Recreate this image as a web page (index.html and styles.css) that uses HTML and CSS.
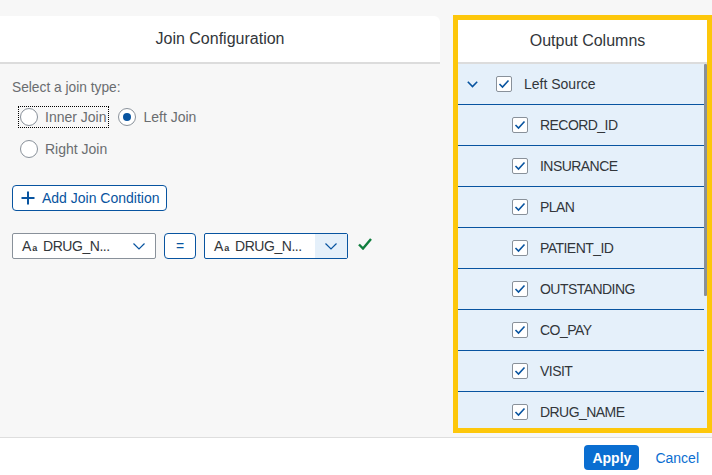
FILE: index.html
```html
<!DOCTYPE html>
<html>
<head>
<meta charset="utf-8">
<link rel="stylesheet" href="styles.css">
</head>
<body>
<div class="app">
  <div class="main">
    <section class="join-panel">
      <header class="panel-header join-header">Join Configuration</header>
      <div class="join-body">
        <div class="field-label">Select a join type:</div>
        <div class="radio-group">
          <div class="radio-row">
            <label class="radio focused"><span class="radio-circle"></span>Inner Join</label>
            <label class="radio"><span class="radio-circle checked"></span>Left Join</label>
          </div>
          <div class="radio-row">
            <label class="radio"><span class="radio-circle"></span>Right Join</label>
          </div>
        </div>
        <button class="btn-ghost add-btn">
          <svg class="plus" width="14" height="14" viewBox="0 0 14 14"><path d="M7 0.5V13.5M0.5 7H13.5" stroke="#0854a0" stroke-width="2" fill="none"/></svg>
          Add Join Condition
        </button>
        <div class="condition">
          <div class="select">
            <span class="type-icon">A<span class="small-a">a</span></span>
            <span class="select-text">DRUG_N...</span>
            <span class="select-arrow">
              <svg width="12" height="7" viewBox="0 0 12 7"><path d="M0.5 0.5L6 6L11.5 0.5" stroke="#0854a0" stroke-width="1.2" fill="none"/></svg>
            </span>
          </div>
          <button class="btn-ghost eq-btn">=</button>
          <div class="select select-active">
            <span class="type-icon">A<span class="small-a">a</span></span>
            <span class="select-text">DRUG_N...</span>
            <span class="select-arrow">
              <svg width="12" height="7" viewBox="0 0 12 7"><path d="M0.5 0.5L6 6L11.5 0.5" stroke="#0854a0" stroke-width="1.2" fill="none"/></svg>
            </span>
          </div>
          <svg class="ok" width="14" height="12" viewBox="0 0 14 12"><path d="M1 6.5L5 10.5L13 1" stroke="#107e3e" stroke-width="2.4" fill="none"/></svg>
        </div>
      </div>
    </section>
    <section class="output-panel">
      <header class="panel-header out-header">Output Columns</header>
      <div class="tree">
        <div class="tree-rows">
          <div class="tree-row parent">
            <svg class="expander" width="11" height="7" viewBox="0 0 11 7"><path d="M0.8 0.8L5.5 5.5L10.2 0.8" stroke="#0854a0" stroke-width="1.6" fill="none"/></svg>
            <span class="cb"><svg width="12" height="10" viewBox="0 0 12 10"><path d="M1.5 5L4.5 8L10.5 1.5" stroke="#0854a0" stroke-width="1.6" fill="none"/></svg></span>
            <span class="row-text">Left Source</span>
          </div>
          <div class="tree-row child"><span class="cb"><svg width="12" height="10" viewBox="0 0 12 10"><path d="M1.5 5L4.5 8L10.5 1.5" stroke="#0854a0" stroke-width="1.6" fill="none"/></svg></span><span class="row-text caps">RECORD_ID</span></div>
          <div class="tree-row child"><span class="cb"><svg width="12" height="10" viewBox="0 0 12 10"><path d="M1.5 5L4.5 8L10.5 1.5" stroke="#0854a0" stroke-width="1.6" fill="none"/></svg></span><span class="row-text caps">INSURANCE</span></div>
          <div class="tree-row child"><span class="cb"><svg width="12" height="10" viewBox="0 0 12 10"><path d="M1.5 5L4.5 8L10.5 1.5" stroke="#0854a0" stroke-width="1.6" fill="none"/></svg></span><span class="row-text caps">PLAN</span></div>
          <div class="tree-row child"><span class="cb"><svg width="12" height="10" viewBox="0 0 12 10"><path d="M1.5 5L4.5 8L10.5 1.5" stroke="#0854a0" stroke-width="1.6" fill="none"/></svg></span><span class="row-text caps">PATIENT_ID</span></div>
          <div class="tree-row child"><span class="cb"><svg width="12" height="10" viewBox="0 0 12 10"><path d="M1.5 5L4.5 8L10.5 1.5" stroke="#0854a0" stroke-width="1.6" fill="none"/></svg></span><span class="row-text caps">OUTSTANDING</span></div>
          <div class="tree-row child"><span class="cb"><svg width="12" height="10" viewBox="0 0 12 10"><path d="M1.5 5L4.5 8L10.5 1.5" stroke="#0854a0" stroke-width="1.6" fill="none"/></svg></span><span class="row-text caps">CO_PAY</span></div>
          <div class="tree-row child"><span class="cb"><svg width="12" height="10" viewBox="0 0 12 10"><path d="M1.5 5L4.5 8L10.5 1.5" stroke="#0854a0" stroke-width="1.6" fill="none"/></svg></span><span class="row-text caps">VISIT</span></div>
          <div class="tree-row child"><span class="cb"><svg width="12" height="10" viewBox="0 0 12 10"><path d="M1.5 5L4.5 8L10.5 1.5" stroke="#0854a0" stroke-width="1.6" fill="none"/></svg></span><span class="row-text caps">DRUG_NAME</span></div>
        </div>
        <div class="scroll-thumb"></div>
      </div>
    </section>
  </div>
  <footer class="footer">
    <button class="btn-emph">Apply</button>
    <button class="btn-transparent">Cancel</button>
  </footer>
</div>
</body>
</html>
```

FILE: styles.css
```css
* { box-sizing: border-box; }
html, body { margin: 0; padding: 0; }
body {
  width: 712px;
  height: 475px;
  overflow: hidden;
  background: #ffffff;
  font-family: "Liberation Sans", Arial, sans-serif;
  color: #32363a;
}
.app { display: flex; flex-direction: column; height: 475px; }
.main {
  height: 438px;
  background: #f7f7f7;
  border-bottom: 1px solid #dedede;
  display: flex;
  align-items: flex-start;
  padding-top: 15px;
  gap: 13px;
}
.join-panel {
  width: 440px;
  margin-top: 1px;
}
.panel-header {
  background: #ffffff;
  border-bottom: 2px solid #dcdcdc;
  display: flex;
  align-items: center;
  justify-content: center;
  font-size: 16px;
  color: #32363a;
}
.join-header {
  height: 48px;
  border-top-right-radius: 6px;
}
.join-body {
  padding: 15px 0 0 12px;
}
.field-label {
  font-size: 13.75px;
  line-height: 18px;
  color: #6a6d70;
}
.radio-group {
  margin-top: 9px;
  margin-left: 6px;
  display: flex;
  flex-direction: column;
  gap: 10px;
}
.radio-row { display: flex; gap: 7px; height: 22px; }
.radio {
  display: flex;
  align-items: center;
  gap: 7px;
  padding: 0 2px 0 1px;
  font-size: 14px;
  color: #6a6d70;
  border: 1px dotted transparent;
}
.radio.focused { border-color: #000000; }
.radio-circle {
  width: 18px;
  height: 18px;
  border-radius: 50%;
  border: 1px solid #89919a;
  background: #ffffff;
  display: flex;
  align-items: center;
  justify-content: center;
}
.radio-circle.checked::after {
  content: "";
  width: 8px;
  height: 8px;
  border-radius: 50%;
  background: #0854a0;
}
.btn-ghost {
  font-family: inherit;
  background: #ffffff;
  border: 1px solid #0854a0;
  border-radius: 4px;
  color: #0854a0;
  font-size: 14px;
  padding: 0;
  display: flex;
  align-items: center;
}
.add-btn {
  margin-top: 25px;
  height: 26px;
  width: 155px;
  padding-left: 8px;
  gap: 7px;
}
.condition {
  margin-top: 22px;
  display: flex;
  align-items: center;
  gap: 8px;
  height: 26px;
}
.select {
  width: 144px;
  height: 26px;
  border: 1px solid #89919a;
  border-radius: 2px;
  background: #ffffff;
  display: flex;
  align-items: center;
  padding-left: 9px;
  font-size: 14px;
  color: #32363a;
}
.select-active { border-color: #0854a0; }
.type-icon { font-size: 14px; display: flex; align-items: baseline; width: 21px; }
.small-a { font-size: 9px; font-weight: bold; margin-left: 1px; }
.select-text { flex: 1; letter-spacing: -0.45px; }
.select-arrow {
  width: 32px;
  height: 100%;
  display: flex;
  align-items: center;
  justify-content: center;
}
.select-active .select-arrow { background: #e5f0fa; }
.eq-btn {
  width: 32px;
  height: 26px;
  justify-content: center;
  font-size: 14px;
}
.ok { margin-left: 2px; margin-top: -4px; }

.output-panel {
  width: 259px;
  height: 418px;
  border: 5px solid #fdc70b;
  display: flex;
  flex-direction: column;
  background: #e5f0fa;
}
.out-header {
  height: 44px;
  flex: none;
  padding-left: 10px;
}
.tree {
  position: relative;
  flex: 1;
  overflow: hidden;
  padding-right: 3px;
}
.tree-row {
  height: 41px;
  border-bottom: 1px solid #0854a0;
  display: flex;
  align-items: center;
  font-size: 14px;
  color: #32363a;
}
.row-text.caps { letter-spacing: -0.55px; }
.tree-row.parent { padding-left: 9px; }
.tree-row.child { padding-left: 54px; }
.expander { margin-right: 18px; }
.cb {
  width: 16px;
  height: 16px;
  border: 1px solid #89919a;
  border-radius: 2px;
  background: #ffffff;
  display: flex;
  align-items: center;
  justify-content: center;
  margin-right: 12px;
  flex: none;
}
.scroll-thumb {
  position: absolute;
  right: 0;
  top: 0;
  width: 3px;
  height: 232px;
  background: #8a9096;
  border-radius: 1px;
}
.footer {
  flex: 1;
  display: flex;
  justify-content: flex-end;
  align-items: flex-start;
  padding-top: 7px;
  padding-right: 5px;
  gap: 8px;
}
.btn-emph {
  font-family: inherit;
  height: 25px;
  width: 55px;
  background: #0a6ed1;
  color: #ffffff;
  border: none;
  border-radius: 4px;
  font-weight: bold;
  font-size: 14px;
  padding: 0;
}
.btn-transparent {
  font-family: inherit;
  height: 25px;
  background: transparent;
  border: none;
  color: #0a6ed1;
  font-size: 14px;
  padding: 0 8px;
}
```
